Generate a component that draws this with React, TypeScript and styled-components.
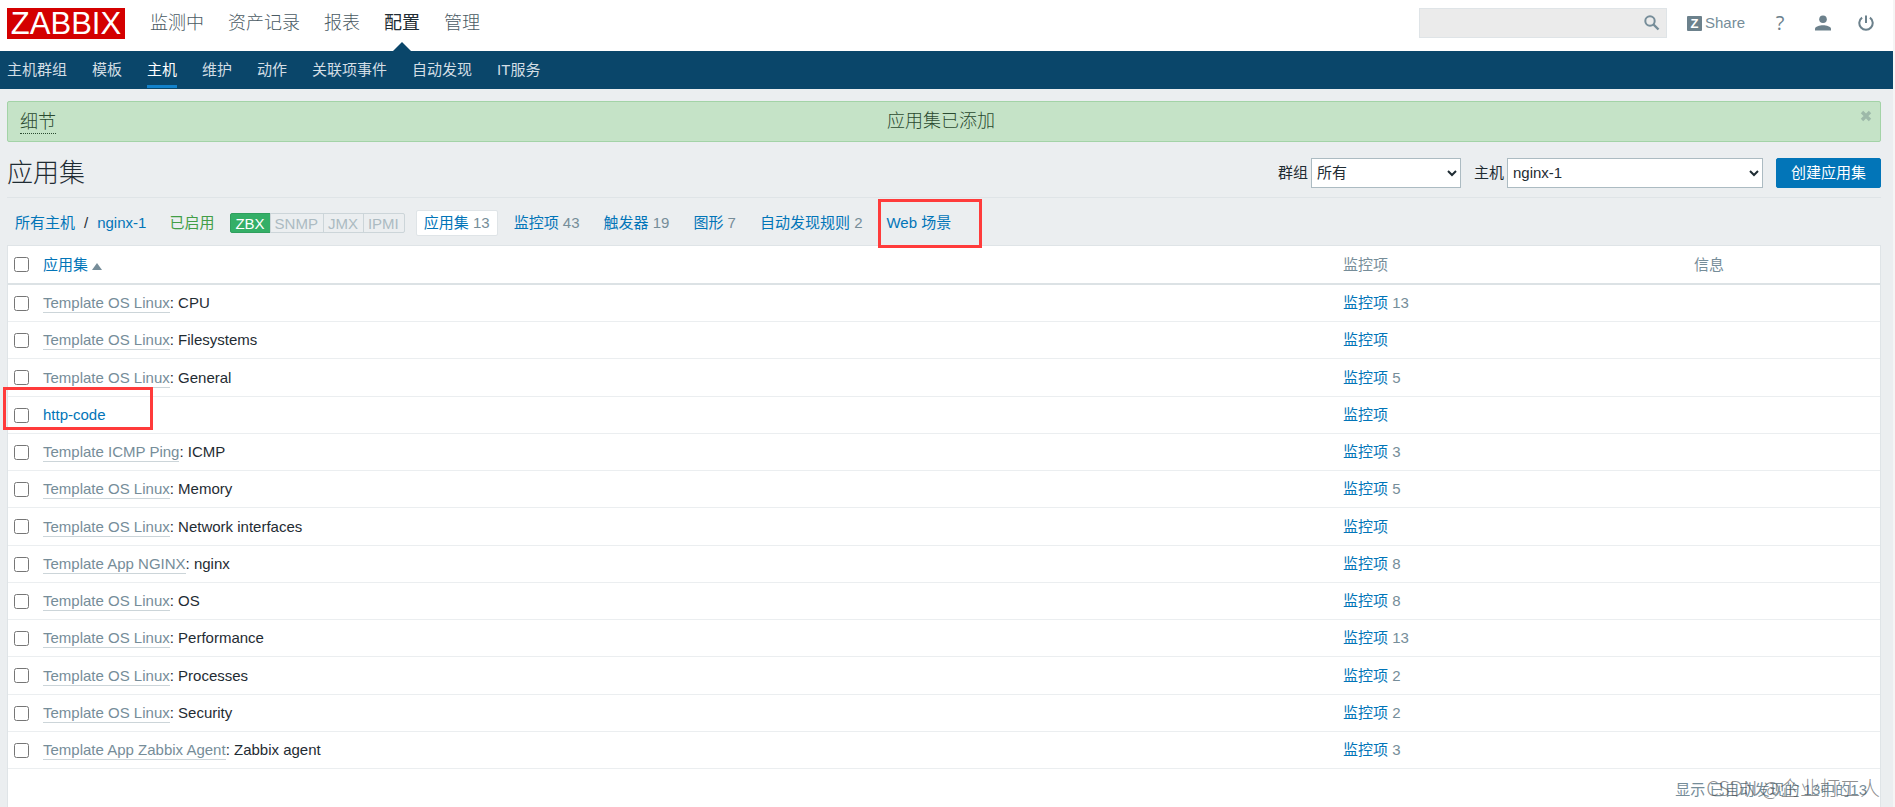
import React from "react";
import styled, { createGlobalStyle } from "styled-components";

const GlobalStyle = createGlobalStyle`
  *, *::before, *::after { box-sizing: border-box; }
  body {
    margin: 0;
    background: #ebeef0;
    color: #1f2c33;
    font-family: "Liberation Sans", "Noto Sans CJK SC", sans-serif;
    font-size: 15px;
    line-height: 20px;
  }
  a { color: #0275b8; text-decoration: none; }
  button, input, select { font: inherit; color: inherit; }
  button { cursor: pointer; }
`;

const Page = styled.div`
  display: flex;
  flex-direction: column;
  min-height: 100vh;
  border-right: 2px solid #f5f5f5;
`;

const Header = styled.header`
  display: flex;
  align-items: center;
  height: 51px;
  padding: 0 19px 5px 7px;
  background: #fff;
`;

const Logo = styled.a`
  display: block;
  width: 118px;
  height: 31px;
  margin-right: 25px;
  background: #d40000;
  color: #fff;
  font-size: 31px;
  line-height: 32px;
  text-align: center;
`;

const MainMenu = styled.nav`
  display: flex;
  gap: 24px;
  margin-right: auto;
`;

const MainLink = styled.a<{ $active?: boolean }>`
  position: relative;
  color: ${(p) => (p.$active ? "#1f2c33" : "#4a5a63")};
  font-size: 18px;
  font-weight: ${(p) => (p.$active ? 400 : 300)};
  line-height: 48px;

  &::after {
    content: "";
    display: ${(p) => (p.$active ? "block" : "none")};
    position: absolute;
    left: 50%;
    bottom: -4px;
    margin-left: -9px;
    border: 9px solid transparent;
    border-top-width: 0;
    border-bottom-color: #0a466a;
  }
`;

const SearchForm = styled.form`
  display: flex;
  align-items: center;
  width: 248px;
  height: 30px;
  margin-right: 20px;
  background: #ebebeb;
  border: 1px solid #dfe4e7;
`;

const SearchInput = styled.input`
  flex: 1;
  min-width: 0;
  height: 28px;
  padding: 0 6px;
  border: 0;
  outline: 0;
  background: transparent;
`;

const IconButton = styled.button`
  display: flex;
  align-items: center;
  justify-content: center;
  min-width: 16px;
  padding: 0;
  border: 0;
  background: transparent;
  color: #768d99;
`;

const SearchButton = styled(IconButton)`
  margin-right: 6px;
`;

const HeaderTools = styled.div`
  display: flex;
  align-items: center;
  gap: 27px;
`;

const ShareLink = styled.a`
  display: flex;
  align-items: center;
  gap: 3px;
  color: #768d99;
`;

const ShareBadge = styled.span`
  width: 15px;
  height: 15px;
  border-radius: 1px;
  background: #6c818c;
  color: #fff;
  font-size: 13px;
  font-weight: 700;
  line-height: 15px;
  text-align: center;
`;

const HelpGlyph = styled.span`
  color: #6c818c;
  font-family: "Open Sans", sans-serif;
  font-size: 20px;
  font-weight: 500;
`;

const SubMenu = styled.nav`
  display: flex;
  gap: 25px;
  height: 38px;
  padding: 0 7px;
  background: #0a466a;
`;

const SubLink = styled.a<{ $active?: boolean }>`
  height: 37px;
  border-bottom: 3px solid ${(p) => (p.$active ? "#1282cc" : "transparent")};
  color: ${(p) => (p.$active ? "#fff" : "#d3dee5")};
  line-height: 37px;
`;

const Content = styled.main`
  display: flex;
  flex: 1;
  flex-direction: column;
  padding: 12px 12px 0 7px;
`;

const Message = styled.div`
  display: flex;
  align-items: flex-start;
  height: 41px;
  padding: 8px 8px 8px 12px;
  background: #c5e3c7;
  border: 1px solid #a3d3a7;
  border-radius: 2px;
  color: #2a4a30;
  font-size: 18px;
  font-weight: 300;
`;

const DetailsButton = styled.button`
  height: 24px;
  padding: 0;
  border: 0;
  border-bottom: 1px dotted #2a4a30;
  background: transparent;
  line-height: 22px;
`;

const MessageText = styled.span`
  flex: 1;
  padding-right: 34px;
  line-height: 22px;
  text-align: center;
`;

const CloseButton = styled(IconButton)`
  min-width: 12px;
  color: #9db9a9;
`;

const TitleBar = styled.div`
  display: flex;
  align-items: center;
  height: 56px;
  padding-top: 6px;
  border-bottom: 1px solid #dfe4e7;
`;

const Title = styled.h1`
  margin: 0 auto 0 0;
  font-size: 26px;
  font-weight: 300;
  line-height: 30px;
`;

const Filter = styled.label`
  display: flex;
  align-items: center;
  gap: 3px;
  margin-right: 13px;
`;

const Select = styled.select<{ $width: number }>`
  width: ${(p) => p.$width}px;
  height: 30px;
  padding: 0 1px;
  background-color: #fff;
  border: 1px solid #acbbc2;
  border-radius: 0;
`;

const CreateButton = styled.button`
  height: 30px;
  padding: 0 14px;
  border: 1px solid #0275b8;
  border-radius: 2px;
  background: #0275b8;
  color: #fff;
`;

const HostBar = styled.div`
  display: flex;
  align-items: center;
  height: 47px;
  padding: 3px 8px 0;
`;

const Breadcrumbs = styled.div`
  display: flex;
  gap: 9px;
  margin-right: 23px;
`;

const Enabled = styled.span`
  margin-right: 16px;
  color: #429e47;
`;

const Interfaces = styled.div`
  display: flex;
  margin-right: 12px;
`;

const Interface = styled.span<{ $on?: boolean }>`
  height: 20px;
  margin-right: -1px;
  padding: 0 5px 0 4px;
  border: 1px solid ${(p) => (p.$on ? "#2f9f5e" : "#ccd5d9")};
  background: ${(p) => (p.$on ? "#34af67" : "transparent")};
  color: ${(p) => (p.$on ? "#fff" : "#acbbc2")};
  line-height: 19px;

  &:first-child { border-radius: 2px 0 0 2px; }
  &:last-child { border-radius: 0 2px 2px 0; }
`;

const Tabs = styled.nav`
  display: flex;
  gap: 8px;
`;

const Tab = styled.span<{ $active?: boolean }>`
  position: relative;
  height: 26px;
  padding: 0 7px;
  border: 1px solid ${(p) => (p.$active ? "#dfe4e7" : "transparent")};
  border-radius: 2px;
  background: ${(p) => (p.$active ? "#fff" : "transparent")};
  line-height: 24px;
`;

const Count = styled.span`
  color: #768d99;
`;

const Highlight = styled.span<{ $box: string }>`
  position: absolute;
  inset: ${(p) => p.$box};
  border: 3px solid #ff3b3b;
  pointer-events: none;
`;

const Panel = styled.section`
  flex: 1;
  background: #fff;
  border: 1px solid #dfe4e7;
  border-bottom: 0;
`;

const Table = styled.table`
  width: 100%;
  border-collapse: separate;
  border-spacing: 0;
  table-layout: fixed;
`;

const HeadCell = styled.th<{ $width?: number }>`
  width: ${(p) => (p.$width ? `${p.$width}px` : "auto")};
  height: 39px;
  padding: 0 6px;
  border-bottom: 2px solid #dce2e5;
  color: #768d99;
  font-weight: 400;
  text-align: left;
`;

const Cell = styled.td`
  position: relative;
  height: 37px;
  padding: 0 6px;
  border-bottom: 1px solid #ebeef0;

  tr:nth-child(4n + 3) > & { height: 38px; }
`;

const Checkbox = styled.input`
  display: block;
  width: 15px;
  height: 15px;
  margin: 0;
`;

const SortArrow = styled.span`
  display: inline-block;
  margin-left: 4px;
  border: 5px solid transparent;
  border-top-width: 0;
  border-bottom: 7px solid #768d99;
`;

const TemplateLink = styled.a`
  border-bottom: 1px solid #ccd5d9;
  padding-bottom: 1px;
  color: #768d99;
`;

const Footer = styled.footer`
  position: relative;
  padding: 11px 13px 4px;
  color: #768d99;
  text-align: right;
`;

const Watermark = styled.span`
  position: absolute;
  right: 0;
  top: 7px;
  color: rgba(70, 70, 70, 0.6);
  font-family: "Noto Sans CJK SC", sans-serif;
  font-size: 20px;
  font-weight: 300;
  line-height: 24px;
`;

type Row = { template?: string; name: string; items?: number };

const rows: Row[] = [
  { template: "Template OS Linux", name: "CPU", items: 13 },
  { template: "Template OS Linux", name: "Filesystems" },
  { template: "Template OS Linux", name: "General", items: 5 },
  { name: "http-code" },
  { template: "Template ICMP Ping", name: "ICMP", items: 3 },
  { template: "Template OS Linux", name: "Memory", items: 5 },
  { template: "Template OS Linux", name: "Network interfaces" },
  { template: "Template App NGINX", name: "nginx", items: 8 },
  { template: "Template OS Linux", name: "OS", items: 8 },
  { template: "Template OS Linux", name: "Performance", items: 13 },
  { template: "Template OS Linux", name: "Processes", items: 2 },
  { template: "Template OS Linux", name: "Security", items: 2 },
  { template: "Template App Zabbix Agent", name: "Zabbix agent", items: 3 },
];

const mainMenu = ["监测中", "资产记录", "报表", "配置", "管理"];
const subMenu = ["主机群组", "模板", "主机", "维护", "动作", "关联项事件", "自动发现", "IT服务"];
const tabs: { label: string; count?: number }[] = [
  { label: "应用集", count: 13 },
  { label: "监控项", count: 43 },
  { label: "触发器", count: 19 },
  { label: "图形", count: 7 },
  { label: "自动发现规则", count: 2 },
  { label: "Web 场景" },
];

const SearchIcon = () => (
  <svg width="16" height="16" viewBox="0 0 16 16" fill="none" stroke="currentColor">
    <circle cx="6" cy="6" r="4.7" strokeWidth="2" />
    <path d="M9.5 9.5l5 5" strokeWidth="2.4" />
  </svg>
);

const UserIcon = () => (
  <svg width="16" height="16" viewBox="0 0 16 16" fill="#6c818c">
    <circle cx="8" cy="4.2" r="3.8" />
    <path d="M0 15.5v-1.600c0-2.300 4.600-3.600 8-3.600s8 1.300 8 3.600v1.600z" />
  </svg>
);

const PowerIcon = () => (
  <svg width="16" height="16" viewBox="0 0 16 16" fill="none" stroke="#6c818c" strokeWidth="2">
    <path d="M8 0.500v7.500" />
    <path d="M4.100 2.600a6.700 6.700 0 1 0 7.800 0" />
  </svg>
);

const CloseIcon = () => (
  <svg width="12" height="12" viewBox="0 0 12 12" stroke="currentColor" strokeWidth="3.400">
    <path d="M2 2l8 8M10 2l-8 8" />
  </svg>
);

export default function App() {
  return (
    <Page>
      <GlobalStyle />
      <Header>
        <Logo href="#">ZABBIX</Logo>
        <MainMenu>
          {mainMenu.map((m) => (
            <MainLink key={m} href="#" $active={m === "配置"}>{m}</MainLink>
          ))}
        </MainMenu>
        <SearchForm onSubmit={(e) => e.preventDefault()}>
          <SearchInput type="text" aria-label="搜索" />
          <SearchButton type="submit" aria-label="搜索"><SearchIcon /></SearchButton>
        </SearchForm>
        <HeaderTools>
          <ShareLink href="#"><ShareBadge>Z</ShareBadge>Share</ShareLink>
          <IconButton><HelpGlyph>?</HelpGlyph></IconButton>
          <IconButton aria-label="用户"><UserIcon /></IconButton>
          <IconButton aria-label="退出"><PowerIcon /></IconButton>
        </HeaderTools>
      </Header>
      <SubMenu>
        {subMenu.map((m) => (
          <SubLink key={m} href="#" $active={m === "主机"}>{m}</SubLink>
        ))}
      </SubMenu>
      <Content>
        <Message>
          <DetailsButton>细节</DetailsButton>
          <MessageText>应用集已添加</MessageText>
          <CloseButton aria-label="关闭"><CloseIcon /></CloseButton>
        </Message>
        <TitleBar>
          <Title>应用集</Title>
          <Filter>
            群组
            <Select $width={150} defaultValue="所有"><option>所有</option></Select>
          </Filter>
          <Filter>
            主机
            <Select $width={256} defaultValue="nginx-1"><option>nginx-1</option></Select>
          </Filter>
          <CreateButton>创建应用集</CreateButton>
        </TitleBar>
        <HostBar>
          <Breadcrumbs>
            <a href="#">所有主机</a>
            <span>/</span>
            <a href="#">nginx-1</a>
          </Breadcrumbs>
          <Enabled>已启用</Enabled>
          <Interfaces>
            <Interface $on>ZBX</Interface>
            <Interface>SNMP</Interface>
            <Interface>JMX</Interface>
            <Interface>IPMI</Interface>
          </Interfaces>
          <Tabs>
            {tabs.map((t, i) => (
              <Tab key={t.label} $active={i === 0}>
                <a href="#">{t.label}</a>
                {t.count !== undefined && <Count> {t.count}</Count>}
                {t.label === "Web 场景" && <Highlight $box="-12px -24px -13px -1px" />}
              </Tab>
            ))}
          </Tabs>
        </HostBar>
        <Panel>
          <Table>
            <thead>
              <tr>
                <HeadCell $width={29}><Checkbox type="checkbox" aria-label="全选" /></HeadCell>
                <HeadCell><a href="#">应用集<SortArrow /></a></HeadCell>
                <HeadCell $width={351}>监控项</HeadCell>
                <HeadCell $width={192}>信息</HeadCell>
              </tr>
            </thead>
            <tbody>
              {rows.map((r) => (
                <tr key={r.name}>
                  <Cell>
                    <Checkbox type="checkbox" aria-label={r.name} />
                    {!r.template && <Highlight $box="-10px -116px 3px -5px" />}
                  </Cell>
                  <Cell>
                    {r.template ? (
                      <><TemplateLink href="#">{r.template}</TemplateLink>: {r.name}</>
                    ) : (
                      <a href="#">{r.name}</a>
                    )}
                  </Cell>
                  <Cell>
                    <a href="#">监控项</a>
                    {r.items !== undefined && <Count> {r.items}</Count>}
                  </Cell>
                  <Cell />
                </tr>
              ))}
            </tbody>
          </Table>
          <Footer>
            显示 已自动发现的 13中的13
            <Watermark>CSDN @企业打工人</Watermark>
          </Footer>
        </Panel>
      </Content>
    </Page>
  );
}
